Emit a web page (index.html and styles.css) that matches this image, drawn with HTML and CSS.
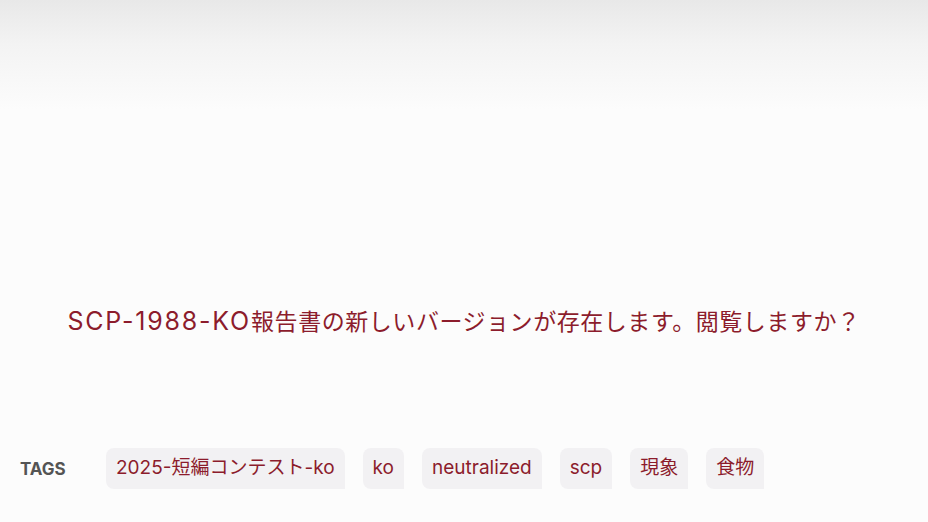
FILE: index.html
```html
<!DOCTYPE html>
<html lang="ja">
<head>
    <meta charset="UTF-8">
    <meta name="viewport" content="width=device-width, initial-scale=1.0">
    <title>SCP-1988-KO</title>
    <link rel="stylesheet" href="styles.css">
</head>
<body>
    <div class="page">
        <div class="top-fade"></div>
        <main class="content">
            <p class="notice"><span class="doc-id">SCP-1988-KO</span>報告書の新しいバージョンが存在します。閲覧しますか？</p>
        </main>
        <div class="tags">
            <span class="tags-label">TAGS</span>
            <ul class="tag-list">
                <li class="tag">2025-短編コンテスト-ko</li>
                <li class="tag">ko</li>
                <li class="tag">neutralized</li>
                <li class="tag">scp</li>
                <li class="tag">現象</li>
                <li class="tag">食物</li>
            </ul>
        </div>
    </div>
</body>
</html>
```

FILE: styles.css
```css
body {
    margin: 0;
    padding: 0;
    background-color: #fcfcfc;
    font-family: Inter, "Noto Sans CJK JP", sans-serif;
}
.page {
    position: relative;
    height: 522px;
    display: flex;
    flex-direction: column;
}
.top-fade {
    position: absolute;
    top: 0;
    left: 0;
    right: 0;
    height: 110px;
    background: linear-gradient(to bottom, #e8e8e8, #f3f3f3 40%, #fcfcfc);
    pointer-events: none;
}
.content {
    padding-top: 303px;
}
.notice {
    margin: 0;
    text-align: center;
    font-size: 23px;
    letter-spacing: 0.55px;
    line-height: 36px;
    color: #8c1c2c;
}
.doc-id {
    font-size: 25px;
    letter-spacing: 1.8px;
}
.tags {
    display: flex;
    align-items: center;
    padding: 0 20px;
    margin-top: 108px;
}
.tags-label {
    width: 86px;
    font-size: 17px;
    font-weight: 700;
    color: #545454;
}
.tag-list {
    display: flex;
    gap: 18px;
    margin: 0;
    padding: 0;
    list-style: none;
}
.tag {
    padding: 0 10px;
    height: 41px;
    line-height: 40px;
    font-size: 19px;
    color: #8c1c2c;
    background-color: #f2f1f3;
    border-radius: 8px 8px 0 8px;
}
```
